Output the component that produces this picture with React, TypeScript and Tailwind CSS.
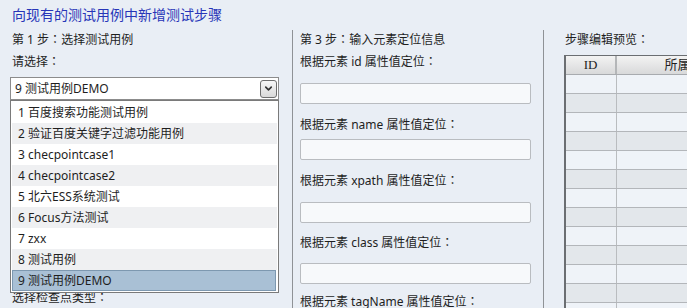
import React from 'react';
import { ChevronDown } from 'lucide-react';

const cases = [
  '1 百度搜索功能测试用例',
  '2 验证百度关键字过滤功能用例',
  '3 checpointcase1',
  '4 checpointcase2',
  '5 北六ESS系统测试',
  '6 Focus方法测试',
  '7 zxx',
  '8 测试用例',
  '9 测试用例DEMO',
];

const locators = [
  { attr: 'id', labelMt: 'mt-[2px]', inputMt: 'mt-[11px]' },
  { attr: 'name', labelMt: 'mt-[11px]', inputMt: 'mt-[4px]' },
  { attr: 'xpath', labelMt: 'mt-[11px]', inputMt: 'mt-[11px]' },
  { attr: 'class', labelMt: 'mt-[10px]', inputMt: 'mt-[10px]' },
];

// centred full-width colon, as the original font draws it
const Colon: React.FC = () => (
  <span className="leading-none" style={{ fontFamily: '"Noto Sans CJK TC", sans-serif' }}>：</span>
);

const App: React.FC = () => {
  const selected = 8;
  const rows = Array.from({ length: 13 });

  return (
    <div
      className="w-[687px] h-[308px] overflow-hidden bg-[#e9eef5] text-[#1e1e1e] text-[12px] leading-[20px]"
      style={{ fontFamily: '"Noto Sans", "Noto Sans CJK SC", sans-serif' }}
    >
      {/* Title */}
      <div className="h-[30px] pl-[12px] pt-[5px] text-[14px] leading-[20px] text-[#2735b8]">
        向现有的测试用例中新增测试步骤
      </div>

      <div className="flex h-[278px]">
        {/* Step 1 */}
        <div className="relative w-[292px] shrink-0 pl-[10px] pr-[13px]">
          <div className="h-[20px] pl-[2px]">第 1 步<Colon />选择测试用例</div>
          <div className="h-[20px] mt-[2px] pl-[2px]">请选择<Colon /></div>
          <div className="mt-[5px] h-[23px] flex items-center justify-between bg-white border border-[#8c8c8c] pl-[4px] pr-[1px]">
            <span>9 测试用例DEMO</span>
            <div className="w-[17px] h-[18px] flex items-center justify-center rounded-[3px] border border-[#6e6e6e] bg-gradient-to-b from-[#f7f7f7] to-[#d9d9d9]">
              <ChevronDown size={11} strokeWidth={3.5} className="text-[#333]" />
            </div>
          </div>
          <div className="h-[20px] mt-[188px] pl-[2px]">选择检查点类型<Colon /></div>

          {/* Open dropdown list */}
          <div className="absolute left-[10px] top-[70px] w-[269px] bg-white border border-[#7a7a7a] p-[1px]">
            {cases.map((c, i) =>
              i === selected ? (
                <div
                  key={c}
                  className="h-[21px] leading-[19px] pl-[5px] mr-[1px] bg-[#a9c0d5] border border-[#7d98b0]"
                >
                  {c}
                </div>
              ) : (
                <div
                  key={c}
                  className={`h-[21px] leading-[21px] pl-[6px] ${i % 2 === 0 ? 'bg-white' : 'bg-[#eff0f2]'}`}
                >
                  {c}
                </div>
              )
            )}
          </div>
        </div>

        {/* Step 3 */}
        <div className="w-[251px] shrink-0 border-l border-[#8f9296] pl-[7px]">
          <div className="h-[20px]">第 3 步<Colon />输入元素定位信息</div>
          {locators.map((l) => (
            <div key={l.attr}>
              <div className={`h-[20px] ${l.labelMt}`}>根据元素 {l.attr} 属性值定位<Colon /></div>
              <div className={`${l.inputMt} w-[231px] h-[21px] rounded-[2px] border border-[#b9bcc0] bg-[#f7f9fb]`} />
            </div>
          ))}
          <div className="h-[20px] mt-[8px]">根据元素 tagName 属性值定位<Colon /></div>
        </div>

        {/* Preview */}
        <div className="flex-1 overflow-hidden border-l border-[#8f9296] pl-[20px]">
          <div className="h-[20px] pl-[1px]">步骤编辑预览<Colon /></div>
          <div
            className="mt-[5px] w-[200px] border-l-2 border-t border-[#6b6e72]"
            style={{ fontFamily: '"Liberation Serif", "Noto Sans CJK SC", serif' }}
          >
            <div className="flex h-[19px] border-b border-[#a8abaf] bg-gradient-to-b from-[#f3f3f3] to-[#d8d9da] text-[13px] leading-[18px]">
              <div className="w-[51px] text-center border-r-2 border-[#b4b6b8]">ID</div>
              <div className="w-[147px] text-center">所属用例</div>
            </div>
            {rows.map((_, i) => (
              <div
                key={i}
                className={`flex h-[19px] border-b border-[#b3b6ba] ${i % 2 === 0 ? 'bg-[#eff3f8]' : 'bg-[#e3e7eb]'}`}
              >
                <div className="w-[51px] border-r border-[#b9bcbf]" />
                <div className="flex-1" />
              </div>
            ))}
          </div>
        </div>
      </div>
    </div>
  );
};

export default App;
